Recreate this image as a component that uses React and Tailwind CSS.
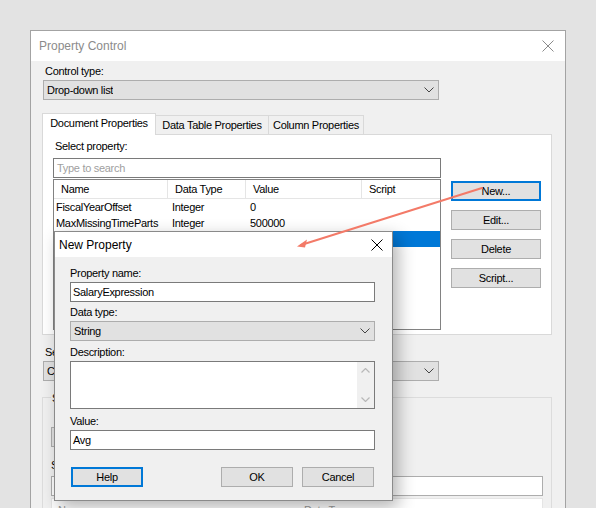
import React from 'react';

const font = { fontFamily: '"Liberation Sans", Arial, sans-serif' };

function Chevron({ className = '' }) {
  return (
    <svg width="10" height="6" viewBox="0 0 10 6" className={className}>
      <path d="M0.5 0.5 L5 5 L9.5 0.5" fill="none" stroke="#444" strokeWidth="1" />
    </svg>
  );
}

function Close({ color = '#000', size = 12 }) {
  return (
    <svg width={size} height={size} viewBox="0 0 12 12">
      <path d="M0.5 0.5 L11.5 11.5 M11.5 0.5 L0.5 11.5" stroke={color} strokeWidth="1" />
    </svg>
  );
}

function Select({ value, width, className = '' }) {
  return (
    <div
      className={`flex h-[20px] items-center justify-between border border-[#adadad] bg-[#e1e1e1] pl-[3px] pr-[4px] ${className}`}
      style={{ width }}
    >
      <span className="truncate">{value}</span>
      <Chevron />
    </div>
  );
}

function Button({ children, focused, width = 90 }) {
  return (
    <div
      className={`flex h-[20px] items-center justify-center bg-[#e1e1e1] ${
        focused ? 'border-2 border-[#0078d7]' : 'border border-[#adadad]'
      }`}
      style={{ width }}
    >
      {children}
    </div>
  );
}

// third row is selected and sits under the New Property dialog
const rows = [
  ['FiscalYearOffset', 'Integer', '0', ''],
  ['MaxMissingTimeParts', 'Integer', '500000', ''],
  ['', '', '', ''],
];

export default function App() {
  return (
    <div
      className="relative h-[508px] w-[596px] overflow-hidden bg-[#e3e3e3] pl-[30px] pt-[30px] text-[11px] tracking-[-0.3px] text-black"
      style={font}
    >
      {/* Property Control window */}
      <div className="h-[500px] w-[536px] border border-[#a3a3a3] bg-[#f0f0f0]">
        <div className="flex h-[30px] items-center justify-between bg-white pl-[8px] pr-[11px]">
          <span className="text-[12px] tracking-normal text-[#8b8b8b]">Property Control</span>
          <Close color="#8a8a8a" size={12} />
        </div>

        <div className="pl-[12px] pt-[3px]">
          <div className="ml-[2px] h-[15px] leading-[15px]">Control type:</div>
          <Select value="Drop-down list" width={396} className="mt-[1px]" />

          {/* Tabs */}
          <div className="-ml-px mt-[13px] flex h-[21px] items-end">
            <div className="relative z-10 -mb-px flex h-[22px] w-[114px] items-center justify-center border-x border-t border-[#d9d9d9] bg-white pb-[2px]">
              Document Properties
            </div>
            <div className="flex h-[19px] w-[113px] items-center justify-center border-r border-t border-[#d9d9d9] bg-[#f0f0f0]">
              Data Table Properties
            </div>
            <div className="flex h-[19px] w-[95px] items-center justify-center border-r border-t border-[#d9d9d9] bg-[#f0f0f0]">
              Column Properties
            </div>
          </div>
          <div className="-ml-px flex h-[201px] w-[510px] border border-[#d9d9d9] bg-white pl-[10px] pt-[4px]">
            <div className="w-[388px]">
              <div className="ml-[2px] h-[15px] leading-[15px]">Select property:</div>
              <div className="mt-[4px] flex h-[20px] items-center border border-[#7a7a7a] pl-[3px] text-[#a0a0a0]">
                Type to search
              </div>
              <div className="mt-px h-[151px] border border-[#828282] bg-white">
                <div className="flex h-[19px] border-b border-[#e5e5e5]">
                  <div className="flex w-[114px] items-center border-r border-[#e5e5e5] pl-[7px]">Name</div>
                  <div className="flex w-[78px] items-center border-r border-[#e5e5e5] pl-[7px]">Data Type</div>
                  <div className="flex w-[116px] items-center border-r border-[#e5e5e5] pl-[7px]">Value</div>
                  <div className="flex flex-1 items-center pl-[7px]">Script</div>
                </div>
                {rows.map((r, i) => (
                  <div
                    key={i}
                    className={`flex h-[16px] items-center ${i === 2 ? 'bg-[#0078d7] text-white' : ''}`}
                  >
                    <div className="w-[114px] pl-[2px]">{r[0]}</div>
                    <div className="w-[78px] pl-[4px]">{r[1]}</div>
                    <div className="w-[116px] pl-[4px]">{r[2]}</div>
                    <div className="flex-1 pl-[4px]">{r[3]}</div>
                  </div>
                ))}
              </div>
            </div>
            <div className="ml-[10px] mt-[42px] flex flex-col gap-[9px]">
              <Button focused>New...</Button>
              <Button>Edit...</Button>
              <Button>Delete</Button>
              <Button>Script...</Button>
            </div>
          </div>

          <div className="ml-[2px] mt-[10px] h-[15px] leading-[15px]">Se</div>
          <Select value="C" width={396} className="mt-px" />

          {/* Settings group */}
          <div className="relative -ml-px mt-[16px] h-[120px] w-[510px] border border-[#dcdcdc] pl-[8px] pt-[29px]">
            <span className="absolute -top-[8px] left-[8px] bg-[#f0f0f0] px-px">S</span>
            <div className="h-[20px] w-[200px] border border-[#adadad] bg-[#e1e1e1]" />
            <div className="mt-[11px] h-[15px] leading-[15px]">S</div>
            <div className="mt-[3px] h-[20px] w-[492px] border border-[#adadad] bg-white" />
            <div className="mt-[2px] flex h-[20px] w-[492px] border border-[#e5e5e5] bg-white pt-[3px] text-[#9a9a9a]">
              <span className="w-[252px] pl-[6px]">Name</span>
              <span>Data Type</span>
            </div>
          </div>
        </div>
      </div>

      {/* New Property dialog */}
      <div className="absolute left-[54px] top-[231px] h-[270px] w-[339px] border border-[#8a8a8a] bg-[#f0f0f0] shadow-[5px_6px_16px_rgba(0,0,0,0.3)]">
        <div className="flex h-[25px] items-center justify-between bg-white pl-[4px] pr-[9px]">
          <span className="text-[12px] tracking-normal">New Property</span>
          <Close size={12} />
        </div>
        <div className="pl-[15px] pt-[9px]">
          <div className="h-[15px] leading-[15px]">Property name:</div>
          <div className="mt-px flex h-[20px] w-[305px] items-center border border-[#7a7a7a] bg-white pl-[2px]">
            SalaryExpression
          </div>
          <div className="mt-[3px] h-[15px] leading-[15px]">Data type:</div>
          <Select value="String" width={305} className="mt-px" />
          <div className="mt-[4px] h-[15px] leading-[15px]">Description:</div>
          <div className="mt-px flex h-[48px] w-[305px] justify-end border border-[#7a7a7a] bg-white">
            <div className="flex w-[17px] flex-col items-center justify-between bg-[#f0f0f0] py-[6px]">
              <svg width="9" height="5" viewBox="0 0 9 5">
                <path d="M0.5 4.5 L4.5 0.5 L8.5 4.5" fill="none" stroke="#b8b8b8" strokeWidth="1.2" />
              </svg>
              <svg width="9" height="5" viewBox="0 0 9 5">
                <path d="M0.5 0.5 L4.5 4.5 L8.5 0.5" fill="none" stroke="#b8b8b8" strokeWidth="1.2" />
              </svg>
            </div>
          </div>
          <div className="mt-[5px] h-[15px] leading-[15px]">Value:</div>
          <div className="mt-px flex h-[20px] w-[305px] items-center border border-[#7a7a7a] bg-white pl-[2px]">
            Avg
          </div>
          <div className="ml-px mt-[17px] flex w-[303px] items-center">
            <Button focused width={72}>Help</Button>
            <div className="ml-auto flex gap-[9px]">
              <Button width={72}>OK</Button>
              <Button width={72}>Cancel</Button>
            </div>
          </div>
        </div>
      </div>

      {/* Callout arrow */}
      <svg className="pointer-events-none absolute left-0 top-0" width="596" height="508">
        <line x1="482" y1="188" x2="301" y2="245" stroke="#f37a68" strokeWidth="2" strokeLinecap="round" />
        <path d="M297 246.5 L307 239.5 L305 247.5 Z" fill="#f37a68" />
      </svg>
    </div>
  );
}
